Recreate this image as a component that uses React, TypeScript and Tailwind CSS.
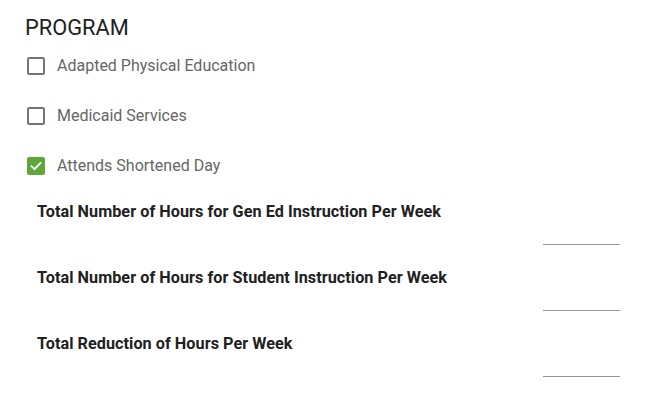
import React from "react"

const checks = [
    { label: "Adapted Physical Education", checked: false },
    { label: "Medicaid Services", checked: false },
    { label: "Attends Shortened Day", checked: true },
]

const fields = [
    "Total Number of Hours for Gen Ed Instruction Per Week",
    "Total Number of Hours for Student Instruction Per Week",
    "Total Reduction of Hours Per Week",
]

function Box({ checked }: { checked: boolean }) {
    if (checked) {
        return (
            <span className="w-[18px] h-[18px] rounded-[2px] bg-[#5fa738] flex items-center justify-center">
                <svg width="14" height="14" viewBox="0 0 24 24" fill="none" stroke="white" strokeWidth="3.2" strokeLinecap="square">
                    <path d="M4.5 12.5l5 5L19.5 7" />
                </svg>
            </span>
        )
    }
    return <span className="w-[18px] h-[18px] rounded-[2px] border-2 border-[#757575]" />
}

export default function App() {
    return (
        <div className="w-[664px] h-[406px] bg-white pl-[25px] pr-[44px] pt-[15px] font-['Roboto',sans-serif]">
            <h2 className="text-[21.8px] leading-[26px] text-[#212121]">PROGRAM</h2>
            <div className="flex flex-col mt-[15px] gap-[30px] pl-[2px]">
                {checks.map((c) => (
                    <label key={c.label} className="flex items-center gap-[12px] h-[20px]">
                        <Box checked={c.checked} />
                        <span className="text-[16px] text-[#666666]">{c.label}</span>
                    </label>
                ))}
            </div>
            <div className="flex flex-col mt-[26px] pl-[12px]">
                {fields.map((f) => (
                    <div key={f} className="h-[66px] flex flex-col">
                        <p className="text-[16.2px] leading-[20px] font-bold text-[#212121] tracking-[0.05px]">{f}</p>
                        <div className="self-end mt-[22px] w-[77px] border-b border-[#949494]" />
                    </div>
                ))}
            </div>
        </div>
    )
}
